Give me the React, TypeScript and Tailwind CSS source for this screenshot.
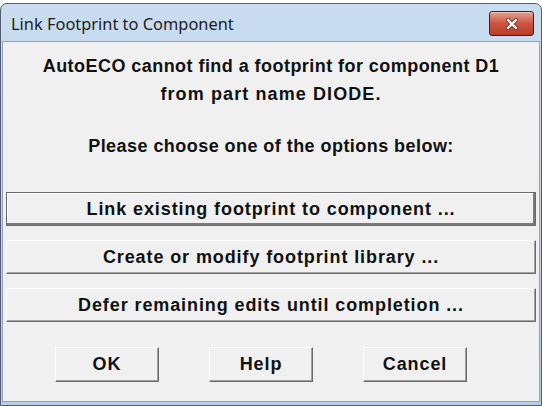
import React from "react";

const body = { fontFamily: '"Liberation Sans", Arial, sans-serif' };
const title = { fontFamily: '"Noto Sans", "Open Sans", sans-serif' };

function WideButton({ label, focused }: { label: string; focused?: boolean }) {
  return (
    <button
      className={`h-[34px] w-full flex items-center justify-center bg-[#f0f0f0] text-[18px] font-bold tracking-[0.9px] text-[#111] ${
        focused
          ? "border border-[#6a6a6a] shadow-[inset_-2px_-2px_0_#7a7a7a,inset_1px_1px_0_#ffffff]"
          : "border border-t-[#fdfdfd] border-l-[#fdfdfd] border-b-[#6a6a6a] border-r-[#6a6a6a] shadow-[inset_-1px_-1px_0_#a0a0a0]"
      }`}
      style={body}
    >
      {label}
    </button>
  );
}

function SmallButton({ label }: { label: string }) {
  return (
    <button
      className="h-[35px] w-[104px] flex items-center justify-center bg-[#f0f0f0] text-[18px] font-bold tracking-[0.9px] text-[#111] border border-t-[#fdfdfd] border-l-[#fdfdfd] border-b-[#6a6a6a] border-r-[#6a6a6a] shadow-[inset_-1px_-1px_0_#a0a0a0]"
      style={body}
    >
      {label}
    </button>
  );
}

export default function App() {
  return (
    <div className="w-[542px] h-[406px] bg-white pt-[3px] overflow-hidden">
      <div className="h-[403px] flex flex-col border border-[#4f5d6e] rounded-t-[7px] bg-gradient-to-b from-[#c9dcf0] to-[#b7cee8] px-[1px] pb-[3px]">
        {/* Title bar */}
        <div className="h-[37px] flex items-start justify-between pl-[9px] pr-[6px]">
          <span className="mt-[8px] text-[16.4px] leading-[24px] text-[#1b1b1b]" style={title}>
            Link Footprint to Component
          </span>
          <div className="mt-[7px] w-[45px] h-[25px] rounded-[3px] border border-[#4a1c18] bg-gradient-to-b from-[#e3a08f] via-[#cc5540] to-[#b83a2b] shadow-[inset_0_1px_0_#f0c3b7] flex items-center justify-center">
            <svg width="14" height="12" viewBox="0 0 14 12">
              <path
                d="M3 2 L11 10 M11 2 L3 10"
                stroke="#7a3a2f"
                strokeWidth="4"
                strokeLinecap="round"
              />
              <path
                d="M3 2 L11 10 M11 2 L3 10"
                stroke="#ffffff"
                strokeWidth="2.3"
                strokeLinecap="round"
              />
            </svg>
          </div>
        </div>

        {/* Client area */}
        <div className="flex-1 flex flex-col bg-[#f0f0f0] border border-[#8ea3bb] px-[3px]">
          <div
            className="pt-[10px] text-center text-[18px] font-bold tracking-[0.45px] leading-[28px] text-[#111]"
            style={body}
          >
            <p>AutoECO cannot find a footprint for component D1</p>
            <p className="tracking-[1.1px]">from part name DIODE.</p>
            <p className="mt-[24px]">Please choose one of the options below:</p>
          </div>

          <div className="mt-[32px] flex flex-col gap-[14px]">
            <WideButton label="Link existing footprint to component ..." focused />
            <WideButton label="Create or modify footprint library ..." />
            <WideButton label="Defer remaining edits until completion ..." />
          </div>

          <div className="mt-[25px] flex pl-[49px] gap-[50px]">
            <SmallButton label="OK" />
            <SmallButton label="Help" />
            <SmallButton label="Cancel" />
          </div>
        </div>
      </div>
    </div>
  );
}
